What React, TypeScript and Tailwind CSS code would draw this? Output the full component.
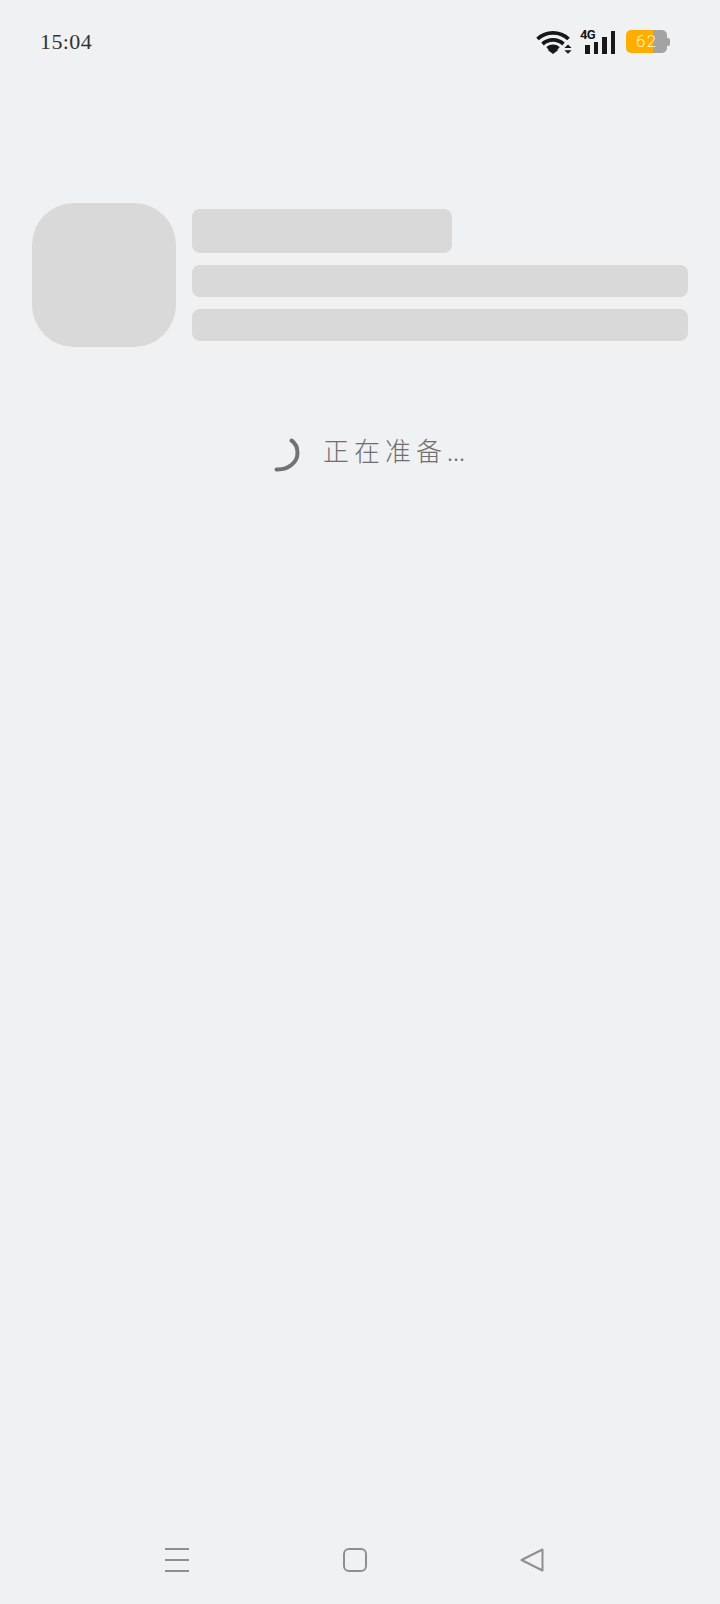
import React from "react";

const SKELETON = "bg-[#d9d9d9]";

function WifiIcon() {
    return (
        <svg width="36" height="24" viewBox="0 0 36 24" className="block">
            <g fill="none" stroke="#17181a" strokeWidth="3.8">
                <path d="M1.500 9C10 0.800 24 0.800 32.500 9" />
                <path d="M6.500 14C12.500 8.600 21.500 8.600 27.500 14" />
                <path d="M11.500 18.500C14.800 15.800 19.200 15.800 22.500 18.500" />
            </g>
            <path d="M17 16.500l5 3.700L17 24l-5-3.800z" fill="#17181a" />
            <path d="M32 14.500l3.600 3.500h-7.200zM32 23.800l3.600-3.500h-7.200z" fill="#17181a" />
        </svg>
    );
}

function SignalIcon() {
    return (
        <div className="relative w-[31px] h-[24px] flex items-end gap-[4px] pl-[1px]">
            <span className="absolute -left-[4px] -top-[2px] text-[13px] leading-[13px] font-bold tracking-[-0.8px] text-[#17181a] font-['Roboto',sans-serif]">
                4G
            </span>
            <div className="w-[4.500px] h-[9px] bg-[#17181a]" />
            <div className="w-[4.500px] h-[12px] bg-[#17181a]" />
            <div className="w-[4.500px] h-[17px] bg-[#17181a]" />
            <div className="w-[4.500px] h-[23px] bg-[#17181a]" />
        </div>
    );
}

function Battery() {
    return (
        <div className="flex items-center">
            <div className="relative w-[41px] h-[23px] rounded-[5px] overflow-hidden flex">
                <div className="w-[27px] bg-[#ffae00]" />
                <div className="flex-1 bg-[#a3a3a3]" />
                <span className="absolute inset-0 flex items-center justify-center text-[17px] font-light tracking-[1px] text-[#fff3cf] font-['Roboto',sans-serif]">
                    62
                </span>
            </div>
            <div className="w-[3px] h-[8px] rounded-r-[2px] bg-[#a3a3a3]" />
        </div>
    );
}

function StatusBar() {
    return (
        <div className="h-[84px] flex items-center justify-between pl-[40px] pr-[50px]">
            <span className="text-[22px] leading-[28px] tracking-[0.4px] text-[#333] font-['Liberation_Serif',serif]">
                15:04
            </span>
            <div className="flex items-center pb-[1px]">
                <WifiIcon />
                <div className="ml-[12px]">
                    <SignalIcon />
                </div>
                <div className="ml-[11px]">
                    <Battery />
                </div>
            </div>
        </div>
    );
}

function Skeleton() {
    return (
        <div className="flex gap-[16px] px-[32px] mt-[119px]">
            <div className={"w-[144px] h-[144px] rounded-[42px] shrink-0 " + SKELETON} />
            <div className="flex-1 flex flex-col gap-[12px] pt-[6px]">
                <div className={"w-[260px] h-[44px] rounded-[8px] " + SKELETON} />
                <div className={"h-[32px] rounded-[8px] " + SKELETON} />
                <div className={"h-[32px] rounded-[8px] " + SKELETON} />
            </div>
        </div>
    );
}

function Loading() {
    return (
        <div className="flex items-start mt-[86px] pl-[274px]">
            <svg width="26" height="34" viewBox="0 0 26 34" className="block mt-[5px]">
                <path
                    d="M17.500 2.500C21.800 5.400 23.500 10.500 23.500 15C23.500 24 15 32 2.500 31.500"
                    fill="none"
                    stroke="#727274"
                    strokeWidth="4"
                    strokeLinecap="round"
                />
            </svg>
            <span className="ml-[23px] text-[26px] leading-[34px] tracking-[5px] font-light text-[#6f6f71] font-['Noto_Sans_CJK_SC',sans-serif]">
                正在准备<span className="tracking-[0px] text-[24px]">...</span>
            </span>
        </div>
    );
}

function NavBar() {
    return (
        <div className="mt-auto h-[56px] flex items-start pl-[165px]">
            <div className="w-[24px] h-[24px] flex flex-col justify-between">
                <div className="h-[2px] bg-[#8f8f91]" />
                <div className="h-[2px] bg-[#8f8f91]" />
                <div className="h-[2px] bg-[#8f8f91]" />
            </div>
            <div className="ml-[154px] w-[24px] h-[24px] rounded-[6px] border-2 border-[#8f8f91]" />
            <svg width="24" height="24" viewBox="0 0 24 24" className="block ml-[153px]">
                <path
                    d="M22.500 1.500V22.500L1.500 12Z"
                    fill="none"
                    stroke="#8f8f91"
                    strokeWidth="2"
                    strokeLinejoin="round"
                />
            </svg>
        </div>
    );
}

export default function App() {
    return (
        <div className="w-[720px] h-[1604px] flex flex-col bg-[#f0f1f3] overflow-hidden">
            <StatusBar />
            <Skeleton />
            <Loading />
            <NavBar />
        </div>
    );
}
